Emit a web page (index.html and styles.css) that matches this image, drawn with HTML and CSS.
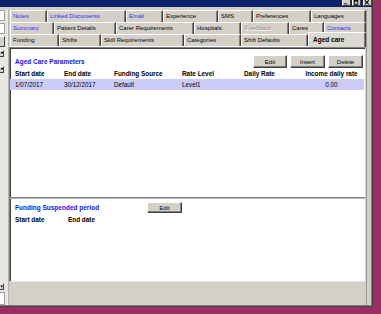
FILE: index.html
```html
<!DOCTYPE html>
<html>
<head>
<meta charset="utf-8">
<title>Aged care</title>
<link rel="stylesheet" href="styles.css">
</head>
<body>
<div class="window">
  <div class="titlebar">
    <span class="tbb"><svg width="9" height="6" viewBox="0 0 9 6"><rect x="2" y="3.5" width="4" height="1" fill="#000"/></svg></span>
    <span class="tbb"><svg width="9" height="6" viewBox="0 0 9 6"><rect x="2.5" y="0.5" width="4" height="4" fill="none" stroke="#000" stroke-width="1"/><rect x="2" y="0" width="5" height="1.2" fill="#000"/></svg></span>
    <span class="tbb close"><svg width="9" height="6" viewBox="0 0 9 6"><path d="M2 0 L6.5 4.5 M6.5 0 L2 4.5" stroke="#000" stroke-width="1.2"/></svg></span>
  </div>
  <div class="client">
    <div class="strip">
      <div class="field"></div>
      <div class="field"></div>
      <div class="sbtn"></div>
      <div class="arrow"><svg width="4" height="6" viewBox="0 0 4 6"><path d="M0.5 2 L3.5 2 L2 4 Z" fill="#000"/></svg></div>
      <div class="arrow second"><svg width="4" height="6" viewBox="0 0 4 6"><path d="M0.5 2 L3.5 2 L2 4 Z" fill="#000"/></svg></div>
      <div class="spacer"></div>
      <div class="dotbtn"><svg width="4" height="6" viewBox="0 0 4 6"><rect x="1" y="2.5" width="1.5" height="1.5" fill="#000"/></svg></div>
      <div class="field tall"></div>
    </div>
    <div class="main">
      <div class="tabs">
        <div class="tabrow r1">
          <div class="tab link">Notes</div>
          <div class="tab link">Linked Documents</div>
          <div class="tab link">Email</div>
          <div class="tab">Experience</div>
          <div class="tab">SMS</div>
          <div class="tab">Preferences</div>
          <div class="tab">Languages</div>
        </div>
        <div class="tabrow r2">
          <div class="tab link">Summary</div>
          <div class="tab">Patient Details</div>
          <div class="tab">Carer Requirements</div>
          <div class="tab">Hospitals</div>
          <div class="tab disabled">Feedback</div>
          <div class="tab">Cares</div>
          <div class="tab link">Contacts</div>
        </div>
        <div class="tabrow r3">
          <div class="tab">Funding</div>
          <div class="tab">Shifts</div>
          <div class="tab">Skill Requirements</div>
          <div class="tab">Categories</div>
          <div class="tab">Shift Defaults</div>
          <div class="tab active">Aged care</div>
        </div>
      </div>
      <div class="page">
        <section class="sec sec-top">
          <div class="sechead">
            <span class="sectitle">Aged Care Parameters</span>
            <div class="btns">
              <button class="btn">Edit</button>
              <button class="btn">Insert</button>
              <button class="btn">Delete</button>
            </div>
          </div>
          <div class="cols head">
            <span>Start date</span><span>End date</span><span>Funding Source</span><span>Rate Level</span><span>Daily Rate</span><span class="c">Income daily rate</span>
          </div>
          <div class="cols row sel">
            <span>1/07/2017</span><span>30/12/2017</span><span>Default</span><span>Level1</span><span></span><span class="c">0.00</span>
          </div>
        </section>
        <div class="splitter"></div>
        <section class="sec sec-bottom">
          <div class="sechead sh2">
            <span class="sectitle fixed">Funding Suspended period</span>
            <button class="btn small">Edit</button>
          </div>
          <div class="cols2 head">
            <span>Start date</span><span>End date</span>
          </div>
        </section>
      </div>
      <div class="footer"></div>
    </div>
  </div>
</div>
</body>
</html>
```

FILE: styles.css
```css
* { box-sizing: border-box; }
html, body { margin: 0; padding: 0; }
body {
  width: 381px;
  height: 314px;
  overflow: hidden;
  background: #9b2f63;
  font-family: "Liberation Sans", Arial, sans-serif;
  font-size: 6.2px;
  color: #000;
}
.window {
  width: 373px;
  height: 307px;
  display: flex;
  flex-direction: column;
  background: #d4d0c8;
  border-right: 1px solid #404040;
  border-bottom: 1px solid #404040;
}
.titlebar {
  height: 7px;
  flex: none;
  background: #0c236b;
  display: flex;
  justify-content: flex-end;
  align-items: flex-start;
  gap: 1px;
}
.tbb {
  width: 9px;
  height: 6px;
  background: #d4d0c8;
  border-right: 1px solid #404040;
  border-bottom: 1px solid #404040;
  border-left: 1px solid #fff;
  display: flex;
  line-height: 0;
}
.tbb svg { display: block; margin-left: -1px; }
.tbb.close { margin-left: 1px; }
.client {
  flex: 1;
  display: flex;
  padding-top: 3px;
  border-right: 1px solid #808080;
  border-bottom: 1px solid #808080;
}
.strip {
  width: 9px;
  flex: none;
  display: flex;
  flex-direction: column;
  background: #e8e7e3;
  border-right: 1px solid #b4b2ac;
}
.strip .field {
  width: 5px;
  height: 11px;
  background: #fff;
  border: 1px solid #a0a0a0;
  border-left: none;
  margin-bottom: 2px;
}
.strip .field.tall { height: 13px; margin-bottom: 0; margin-top: 2px; }
.strip .sbtn {
  width: 5px;
  height: 11px;
  background: #d4d0c8;
  border-top: 1px solid #fff;
  border-right: 1px solid #404040;
  border-bottom: 1px solid #404040;
  margin-bottom: 3px;
}
.strip .arrow, .strip .dotbtn {
  width: 4px;
  height: 7px;
  background: #d4d0c8;
  border-right: 1px solid #404040;
  border-bottom: 1px solid #404040;
  border-top: 1px solid #fff;
  line-height: 0;
}
.strip .arrow svg, .strip .dotbtn svg { display: block; margin-top: -1px; }
.strip .arrow.second { margin-top: 9px; }
.strip .spacer { flex: 1; }
.main {
  width: 358px;
  flex: none;
  display: flex;
  flex-direction: column;
  border-right: 1px solid #9c9a94;
}
.tabs {
  flex: none;
  padding-left: 1px;
  border-bottom: 1px solid #fff;
}
.tabrow {
  display: grid;
  height: 12px;
}
.r1 { grid-template-columns: 37px 79px 37px 55px 35px 58px 55px; }
.r2 { grid-template-columns: 44px 62px 78px 47px 48px 35px 42px; }
.r3 { grid-template-columns: 49px 42px 83px 57px 67px 58px; }
.tab {
  height: 12px;
  line-height: 10px;
  padding-left: 2px;
  white-space: nowrap;
  overflow: hidden;
  background: #d4d0c8;
  border-top: 1px solid #fff;
  border-left: 1px solid #fff;
  border-right: 1px solid #404040;
  box-shadow: inset -1px 0 0 #808080;
  font-size: 6px;
}
.tab.link { color: #2b2bff; }
.tab.disabled { color: #8e8c86; text-shadow: 1px 1px 0 #fff; padding-left: 3px; }
.tab.active {
  margin-top: -2px;
  height: 15px;
  line-height: 13px;
  padding-left: 4px;
  font-weight: bold;
  font-size: 6.5px;
  background: #dcd9d2;
}
.page {
  height: 235px;
  flex: none;
  margin-right: 1px;
  background: #fff;
  border-top: 1px solid #808080;
  border-left: 1px solid #808080;
  border-bottom: 1px solid #e6e6e6;
  box-shadow: inset 1px 1px 0 #404040;
  display: flex;
  flex-direction: column;
}
.sec-top { height: 149px; }
.sec-bottom { flex: 1; }
.sechead {
  display: flex;
  align-items: center;
  justify-content: space-between;
  padding: 7px 2px 1px 5px;
}
.sechead.sh2 {
  justify-content: flex-start;
  padding: 3px 0 1px 5px;
}
.sectitle {
  color: #1515e8;
  font-weight: bold;
  font-size: 6.5px;
}
.sectitle.fixed { width: 132px; }
.btns { display: flex; gap: 3px; }
.btn {
  font-family: inherit;
  font-size: 6px;
  color: #000;
  width: 35px;
  height: 13px;
  padding: 0;
  margin: 0;
  background: #d4d0c8;
  border-top: 1px solid #fff;
  border-left: 1px solid #fff;
  border-right: 1px solid #404040;
  border-bottom: 1px solid #404040;
  box-shadow: inset -1px -1px 0 #808080;
}
.btns .btn:first-child { width: 34px; }
.btn.small { height: 11px; }
.cols {
  display: grid;
  grid-template-columns: 49px 50px 68px 62px 60px 55px;
  padding-left: 5px;
  width: 354px;
}
.cols2 {
  display: grid;
  grid-template-columns: 53px 60px;
  padding-left: 5px;
}
.head {
  height: 10px;
  line-height: 10px;
  font-weight: bold;
  font-size: 6.4px;
}
.cols2.head { height: 11px; line-height: 11px; }
.row {
  height: 11px;
  line-height: 11px;
  font-size: 6.3px;
}
.row.sel { background: #cbcbf8; }
.c { text-align: center; }
.splitter {
  height: 2px;
  flex: none;
  border-top: 1px solid #808080;
  border-bottom: 1px solid #b8b8b8;
}
.footer { flex: 1; }
```
